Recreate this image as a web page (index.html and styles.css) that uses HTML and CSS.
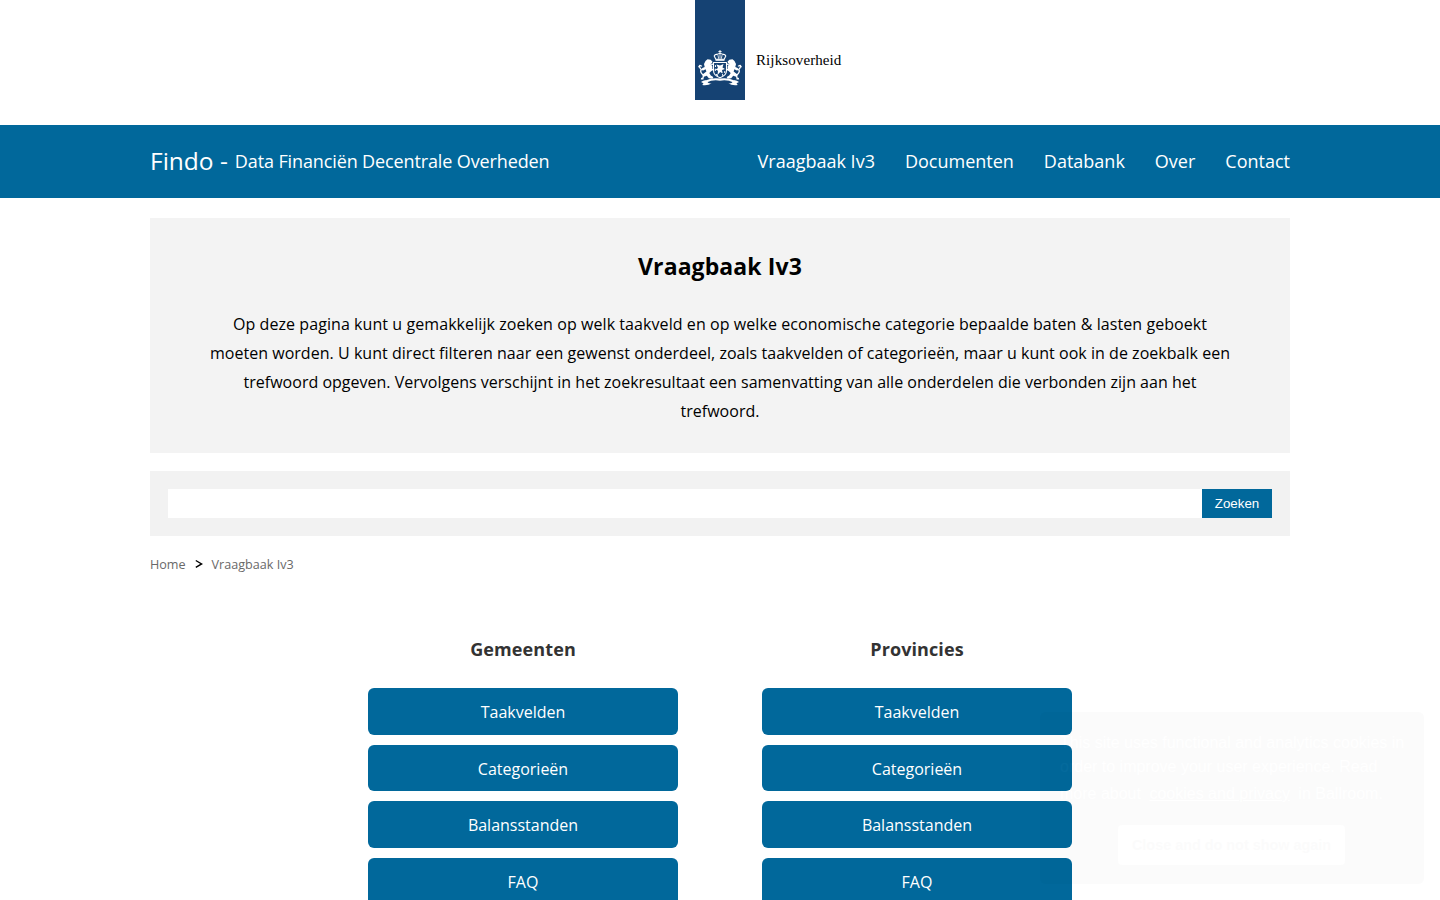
FILE: index.html
```html
<!DOCTYPE html>
<html lang="nl">
<head>
<meta charset="utf-8">
<title>Vraagbaak Iv3 - Findo</title>
<link rel="stylesheet" href="styles.css">
</head>
<body>
<header class="logo">
  <div class="logo-ribbon">
    <svg class="arms" viewBox="0 0 44 37" fill="#fff" stroke="#fff" stroke-linecap="round" stroke-linejoin="round">
      <!-- crown -->
      <path d="M22 .5v3M20.8 1.6h2.4" stroke-width="1" fill="none"/>
      <path d="M17.800 9.200 16.200 6q.8-2 3-1.600Q22 2.600 24.800 4.400q2.200-.4 3 1.600l-1.600 3.200z" fill="none" stroke-width="1.100"/>
      <path d="M20 5.500l.7 3M24 5.500l-.7 3M22 4v4" fill="none" stroke-width=".8"/>
      <path d="M17.500 9.300h9v1.500h-9z" stroke="none"/>
      <!-- shield -->
      <path d="M15.500 12.500h13v8q0 5-6.500 7.200-6.500-2.200-6.500-7.200z" fill="none" stroke-width="1.100"/>
      <path d="M18.500 14.500l3.500 1 3.500-1.500-1 3.500 2.500 1.500-3 1 .7 3.500-2.500-1.500-2.700 3 .5-4.200-2.500-1.200 2.500-1.500z" stroke="none"/>
      <path d="M17.500 15.500v1M17.300 19v1.500M26.700 21.500v1M24.500 24.500v.8M18.500 24.500l1 .8" stroke-width="1.100"/>
      <!-- lions -->
      <g id="lion">
        <path d="M7.500 11l2-1.800 3.200.6 1.800 2-.8 1.800-1.300.4 2 2.500-.2 3.700-2.900 2.700 1.500 2.600 2.500 1.600-.8 1.700-3.700-.5-2-2.500-2.900 1-.5 2.700H2.800l.3-1.600 1.400-.4.300-3.200 3.600-2.800-.8-2.300-2.400 1.300-2.100-.6 1.300-1.800 2.300-1-.7-3z" stroke="none"/>
        <path d="M5 25Q1.500 22 3.300 19.500 1 17.500 1.700 15.800M.8 16.800l1-1.500 1.700.7" fill="none" stroke-width="1.300"/>
        <path d="M12 15.500l3-1.500M12 20l3.500-.5" stroke-width="1.300" fill="none"/>
      </g>
      <use href="#lion" transform="matrix(-1 0 0 1 44 0)"/>
      <!-- motto ribbon -->
      <path d="M8 31.500q7-3.200 14-1.800 7-1.400 14 1.800" fill="none" stroke-width="2.200"/>
      <path d="M3 32q4.500-3 6-.5t5 1.700q-4.500 2.900-9.700 1.900l1.200-1.900zM41 32q-4.500-3-6-.5t-5 1.700q4.500 2.900 9.700 1.900l-1.200-1.900z" stroke="none"/>
    </svg>
  </div>
  <span class="logo-name">Rijksoverheid</span>
</header>
<div class="navbar">
  <div class="wrap nav-inner">
    <div class="brand"><span class="brand-name">Findo -</span><span class="brand-sub">Data Financiën Decentrale Overheden</span></div>
    <nav class="menu"><a>Vraagbaak Iv3</a><a>Documenten</a><a>Databank</a><a>Over</a><a>Contact</a></nav>
  </div>
</div>
<main class="wrap">
  <section class="intro">
    <h1>Vraagbaak Iv3</h1>
    <p><span class="looser">Op deze pagina kunt u gemakkelijk zoeken op welk taakveld en op welke economische categorie bepaalde baten &amp; lasten geboekt</span><br>moeten worden. U kunt direct filteren naar een gewenst onderdeel, zoals taakvelden of categorieën, maar u kunt ook in de zoekbalk een<br><span class="tighter">trefwoord opgeven. Vervolgens verschijnt in het zoekresultaat een samenvatting van alle onderdelen die verbonden zijn aan het</span><br>trefwoord.</p>
  </section>
  <form class="search"><input type="text" aria-label="Zoeken"><button type="button">Zoeken</button></form>
  <div class="crumbs"><a>Home</a><svg class="chevron" viewBox="0 0 8 10"><path d="M.8 1.500 6.600 4.900.8 8.300" fill="none" stroke="#000" stroke-width="1.400"/></svg><a>Vraagbaak Iv3</a></div>
  <div class="columns">
    <section class="column"><h2>Gemeenten</h2><a class="btn">Taakvelden</a><a class="btn">Categorieën</a><a class="btn">Balansstanden</a><a class="btn">FAQ</a></section>
    <section class="column"><h2>Provincies</h2><a class="btn">Taakvelden</a><a class="btn">Categorieën</a><a class="btn">Balansstanden</a><a class="btn">FAQ</a></section>
  </div>
</main>
<aside class="cookie">
  <p>This site uses functional and analytics cookies in<br>order to improve your user experience. Read</p>
  <p class="cookie-more">more about <a>cookies and privacy</a> in Ballroom.</p>
  <button type="button">Close and do not show again</button>
</aside>
</body>
</html>
```
FILE: styles.css
```css
* { box-sizing: border-box; }
html, body { height: 100%; }
body { margin: 0; overflow: hidden; background: #fff; color: #000; font-family: "Open Sans", sans-serif; font-size: 16px; }
h1, h2, p { margin: 0; }
.wrap { width: 1140px; margin: 0 auto; }

.logo { display: flex; height: 125px; padding-left: 695px; }
.logo-ribbon { width: 50px; height: 100px; padding: 50px 3px 0; background: #154273; }
.arms { display: block; width: 44px; height: 37px; }
.logo-name { margin: 51px 0 0 11px; font: 15px/18px "Liberation Serif", serif; letter-spacing: .1px; }

.navbar { height: 73px; background: #01689b; color: #fff; }
.nav-inner { display: flex; justify-content: space-between; align-items: center; height: 100%; padding-bottom: 2px; }
.brand { display: flex; align-items: center; gap: 7px; }
.brand-name { font-size: 24.5px; }
.brand-sub { font-size: 18px; letter-spacing: -.12px; }
.menu { display: flex; gap: 30px; font-size: 18px; }

.intro { height: 235px; margin-top: 20px; padding-top: 30px; background: #f3f3f3; text-align: center; }
.intro h1 { font-size: 23px; line-height: 36px; letter-spacing: .1px; }
.intro p { margin-top: 26px; line-height: 29px; letter-spacing: .035px; white-space: nowrap; }
.intro .looser { letter-spacing: .074px; }
.intro .tighter { letter-spacing: .01px; }

.search { display: flex; height: 65px; margin-top: 18px; padding: 18px; background: #f2f2f2; }
.search input { flex: 1; border: 0; padding: 0 8px; background: #fff; }
.search button { width: 70px; border: 0; padding: 0; background: #01689b; color: #fff; font: 13.333px "Liberation Sans", sans-serif; }

.crumbs { display: flex; align-items: center; height: 20px; margin-top: 18px; font-size: 12.6px; color: #696969; }
.chevron { width: 8px; height: 10px; margin: 0 9px; }

.columns { display: flex; justify-content: center; gap: 84px; margin-top: 60px; }
.column { display: flex; flex-direction: column; gap: 10px; width: 310px; text-align: center; }
.column h2 { margin-bottom: 13.800px; color: #333; font-size: 18px; line-height: 30px; letter-spacing: .1px; }
.btn { height: 46.8px; border-radius: 6px; background: #01689b; color: #fff; line-height: 48px; }

.cookie { position: absolute; left: 1040px; top: 712px; width: 384px; height: 172px; padding: 19px 20px; border-radius: 6px; background: #000; color: #fff; opacity: .011; font: 16px/24px "Liberation Sans", sans-serif; white-space: nowrap; }
.cookie-more { margin-top: 3px; }
.cookie a { margin: 0 4px; text-decoration: underline; }
.cookie button { display: block; width: 227px; height: 40px; margin: 19px auto 0 58px; padding: 0; border: 0; border-radius: 4px; background: #fff; color: #000; font: bold 14.4px "Liberation Sans", sans-serif; }
```
